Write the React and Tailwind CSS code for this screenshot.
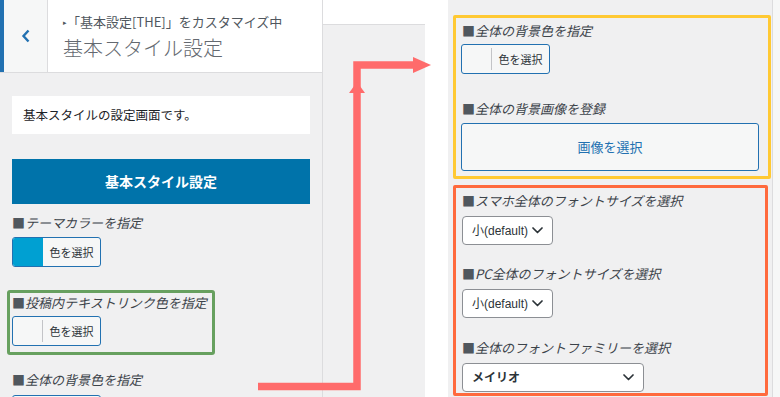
import React from "react";

const Label = ({ children }) => (
  <div className="h-[18px] leading-[18px] text-[13px] whitespace-nowrap text-[#3c434a]">
    <span className="text-[#50575e]">■</span>
    <span className="italic">{children}</span>
  </div>
);

const ColorButton = ({ swatch }) => (
  <div className="flex h-[30px] w-[89px] overflow-hidden rounded-[3px] border border-[#2271b1] bg-[#f6f7f7]">
    {swatch ? (
      <div className="w-[30px] bg-[#00a0d2]" />
    ) : (
      <div className="flex w-[30px] items-center justify-end">
        <div className="h-[22px] w-px bg-[#c3c4c7]" />
      </div>
    )}
    <div className="flex flex-1 items-center justify-center text-[11px] text-[#2c3338]">色を選択</div>
  </div>
);

const Chevron = () => (
  <svg width="11" height="7" viewBox="0 0 11 7" fill="none">
    <polyline points="1,1 5.5,5.5 10,1" stroke="#2c3338" strokeWidth="1.7" strokeLinecap="round" strokeLinejoin="round" />
  </svg>
);

const Select = ({ text, w, bold }) => (
  <div
    className={
      "flex h-[29px] items-center justify-between rounded-[4px] border border-[#8c8f94] bg-white pl-[9px] pr-[9px] font-['Liberation_Sans','Noto_Sans_CJK_JP',sans-serif] text-[12px] text-[#2c3338] " +
      w +
      (bold ? " font-semibold" : "")
    }
  >
    <span>{text}</span>
    <Chevron />
  </div>
);

export default function App() {
  return (
    <div className="relative flex h-[397px] w-[780px] overflow-hidden bg-white font-['Noto_Sans_CJK_JP','Noto_Sans',sans-serif]">
      {/* Left panel */}
      <div className="flex w-[323px] shrink-0 flex-col border-r border-[#dcdcde] bg-[#f0f0f1]">
        <div className="flex h-[73px] shrink-0 border-b border-[#dcdcde] bg-white">
          <div className="w-[4px] bg-[#2271b1]" />
          <div className="flex w-[44px] items-center justify-center border-r border-[#dcdcde] bg-[#f6f7f7]">
            <svg width="10" height="14" viewBox="0 0 10 14" fill="none">
              <polyline points="7.5,1.5 2.5,7 7.5,12.5" stroke="#2271b1" strokeWidth="2.4" strokeLinejoin="miter" />
            </svg>
          </div>
          <div className="flex flex-col pl-[15px] pt-[12px]">
            <div className="flex h-[20px] items-center text-[13px] leading-[20px] text-[#50575e] whitespace-nowrap">
              <span className="text-[7px] leading-none">▸</span>
              <span>「基本設定[THE]」をカスタマイズ中</span>
            </div>
            <div className="mt-[2px] text-[20px] font-light leading-[28px] text-[#646970] whitespace-nowrap">基本スタイル設定</div>
          </div>
        </div>
        <div className="flex flex-col px-[12px]">
          <div className="mt-[23px] flex h-[38px] items-center bg-white px-[11px] text-[12.5px] text-[#1d2327]">
            基本スタイルの設定画面です。
          </div>
          <div className="mt-[25px] flex h-[45px] items-center justify-center bg-[#0073aa] text-[14px] font-bold text-white">
            基本スタイル設定
          </div>
          <div className="mt-[10px]">
            <Label>テーマカラーを指定</Label>
          </div>
          <div className="mt-[5px]">
            <ColorButton swatch />
          </div>
          <div className="ml-[-5px] mt-[23px] flex w-[208px] flex-col rounded-[3px] border-[3px] border-[#67a05f] pb-[6px] pl-[2px] pt-[1px]">
            <Label>投稿内テキストリンク色を指定</Label>
            <div className="mt-[4px]">
              <ColorButton />
            </div>
          </div>
          <div className="mt-[16px]">
            <Label>全体の背景色を指定</Label>
          </div>
          <div className="mt-[6px]">
            <ColorButton />
          </div>
        </div>
      </div>

      {/* Preview strip */}
      <div className="flex w-[102px] shrink-0 flex-col">
        <div className="h-[25px] border-b border-[#dcdcde] bg-white" />
        <div className="flex-1 bg-[#f0f0f1]" />
      </div>

      {/* Gap */}
      <div className="w-[23px] shrink-0 bg-white" />

      {/* Right panel */}
      <div className="flex w-[325px] shrink-0 flex-col border-r border-[#dcdcde] bg-[#f0f0f1] pl-[5px] pt-[15px]">
        <div className="flex w-[318px] flex-col rounded-[2px] border-[3px] border-[#ffc933] pb-[5px] pl-[5px] pt-[4px]">
          <div className="pl-[1px]">
            <Label>全体の背景色を指定</Label>
          </div>
          <div className="mt-[4px]">
            <ColorButton />
          </div>
          <div className="mt-[26px] pl-[1px]">
            <Label>全体の背景画像を登録</Label>
          </div>
          <div className="mt-[5px] flex h-[48px] w-[298px] items-center justify-center rounded-[3px] border border-[#2271b1] bg-[#f6f7f7] text-[13px] text-[#2271b1]">
            画像を選択
          </div>
        </div>
        <div className="mt-[6px] flex w-[315px] flex-col rounded-[2px] border-[3px] border-[#ff6a3d] pb-[1px] pl-[6px] pt-[4px]">
          <Label>スマホ全体のフォントサイズを選択</Label>
          <div className="mt-[6px]">
            <Select text="小(default)" w="w-[91px]" />
          </div>
          <div className="mt-[20px]">
            <Label>PC全体のフォントサイズを選択</Label>
          </div>
          <div className="mt-[6px]">
            <Select text="小(default)" w="w-[91px]" />
          </div>
          <div className="mt-[21px]">
            <Label>全体のフォントファミリーを選択</Label>
          </div>
          <div className="mt-[6px]">
            <Select text="メイリオ" w="w-[182px]" bold />
          </div>
        </div>
      </div>
      <div className="flex-1 bg-[#f6f7f7]" />

      {/* Annotation arrow */}
      <svg className="pointer-events-none absolute left-0 top-0" width="780" height="397" viewBox="0 0 780 397">
        <polyline
          points="258,386.5 357,386.5 357,65 416,65"
          fill="none"
          stroke="#ff6b6b"
          strokeWidth="7.5"
          strokeLinejoin="miter"
        />
        <polygon points="413,57 431,65 413,73" fill="#ff6b6b" />
        <polygon points="349,93 357,82 365,93" fill="#ff6b6b" />
      </svg>
    </div>
  );
}
